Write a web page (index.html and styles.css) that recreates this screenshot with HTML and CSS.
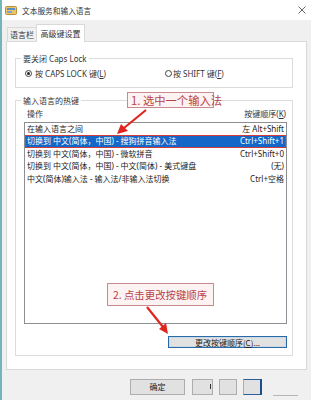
FILE: index.html
```html
<!DOCTYPE html>
<html lang="zh-CN">
<head>
<meta charset="utf-8">
<title>文本服务和输入语言</title>
<link rel="stylesheet" href="styles.css">
</head>
<body>
<div class="window">
  <div class="titlebar">
    <svg class="app-icon" width="12" height="11" viewBox="0 0 12 11">
      <rect x="0.5" y="1.5" width="11" height="8" rx="1" fill="#e9c46a" stroke="#b8903a" stroke-width="1"/>
      <rect x="2" y="3" width="8" height="2" fill="#5b8fc7"/>
      <rect x="2" y="6" width="5" height="2" fill="#7aa6d6"/>
    </svg>
    <span class="title">文本服务和输入语言</span>
    <span class="close">
      <svg width="8" height="8" viewBox="0 0 8 8"><path d="M0.5 0.5 L7.5 7.5 M7.5 0.5 L0.5 7.5" stroke="#555" stroke-width="0.9" fill="none"/></svg>
    </span>
  </div>

  <div class="tabs">
    <div class="tab">语言栏</div>
    <div class="tab tab-active">高级键设置</div>
  </div>

  <div class="panel">
    <div class="group group-caps">
      <div class="group-title">要关闭 Caps Lock</div>
      <div class="radio-row">
        <label class="radio"><span class="radio-dot checked"></span>按 CAPS LOCK 键(<u>L</u>)</label>
        <label class="radio radio-shift"><span class="radio-dot"></span>按 SHIFT 键(<u>F</u>)</label>
      </div>
    </div>

    <div class="group group-hotkeys">
      <div class="group-title">输入语言的热键</div>
      <div class="list-head">
        <span>操作</span>
        <span>按键顺序(<u>K</u>)</span>
      </div>
      <div class="listbox">
        <div class="row"><span>在输入语言之间</span><span>左 Alt+Shift</span></div>
        <div class="row row-selected"><span>切换到 中文(简体，中国) - 搜狗拼音输入法</span><span>Ctrl+Shift+1</span></div>
        <div class="row"><span>切换到 中文(简体，中国) - 微软拼音</span><span>Ctrl+Shift+0</span></div>
        <div class="row"><span>切换到 中文(简体，中国) - 中文(简体) - 美式键盘</span><span>(无)</span></div>
        <div class="row"><span>中文(简体)输入法 - 输入法/非输入法切换</span><span>Ctrl+空格</span></div>
      </div>
      <div class="btn-row">
        <button class="btn btn-change">更改按键顺序(<u>C</u>)...</button>
      </div>
    </div>
  </div>

  <div class="footer">
    <button class="btn btn-ok">确定</button>
    <button class="btn btn-b2"><span class="tick"></span></button>
    <button class="btn btn-b3"></button>
    <button class="btn btn-b4"></button>
    <span class="corner-line"></span>
  </div>

  <div class="callout callout-1">1. 选中一个输入法</div>
  <div class="callout callout-2">2. 点击更改按键顺序</div>

  <svg class="arrows" width="311" height="400" viewBox="0 0 311 400">
    <path d="M146 110 L124 128" stroke="#e0251f" stroke-width="2.2" fill="none"/>
    <path d="M117 134 L121 124 L128 131 Z" fill="#e0251f"/>
    <path d="M147 307 L163 327" stroke="#e0251f" stroke-width="2.2" fill="none"/>
    <path d="M168 334 L159 329 L166 323 Z" fill="#e0251f"/>
  </svg>
</div>
</body>
</html>
```

FILE: styles.css
```css
* { box-sizing: border-box; }

html, body {
  margin: 0;
  padding: 0;
}

body {
  width: 311px;
  height: 400px;
  overflow: hidden;
  background: #f0f0f0;
  font-family: "Noto Sans", "Noto Sans CJK SC", sans-serif;
  font-size: 8px;
  color: #2a2a2a;
}

u { text-decoration: underline; }

.window {
  position: relative;
  height: 400px;
  border-left: 2px solid #74b5b9;
}

.titlebar {
  height: 20px;
  background: #ffffff;
  display: flex;
  align-items: center;
  padding-left: 3px;
}

.app-icon { flex: none; }

.title {
  margin-left: 5px;
  font-family: "Noto Sans CJK SC", sans-serif;
  font-size: 7.7px;
  color: #333;
}

.close {
  margin-left: auto;
  margin-right: 5px;
  display: flex;
}

.tabs {
  height: 21px;
  display: flex;
  align-items: flex-end;
  padding-left: 5px;
  position: relative;
  z-index: 1;
}

.tab {
  height: 14px;
  padding: 0 2px 0 2px;
  width: 29px;
  border: 1px solid #d9d9d9;
  border-bottom: none;
  border-right: none;
  display: flex;
  align-items: center;
  justify-content: center;
  font-family: "Noto Sans CJK SC", sans-serif;
  color: #333;
  background: #f0f0f0;
}

.tab-active {
  height: 18px;
  width: 49px;
  background: #ffffff;
  border-right: 1px solid #d9d9d9;
  margin-bottom: -1px;
  padding-bottom: 1px;
}

.panel {
  margin: 0 4px 0 4px;
  height: 329px;
  background: #ffffff;
  border: 1px solid #d9d9d9;
  padding: 16px 13px 0 8px;
}

.group {
  border: 1px solid #dcdcdc;
  padding: 0 5px 0 8px;
}

.group-title {
  width: fit-content;
  margin: -6px 0 0 -3px;
  padding: 0 2px;
  background: #fff;
  line-height: 11px;
  color: #333;
}

.group-caps {
  height: 30px;
}

.radio-row {
  display: flex;
  align-items: center;
  margin-top: 4px;
  line-height: 11px;
}

.radio {
  display: flex;
  align-items: center;
  color: #333;
}

.radio-dot {
  width: 7px;
  height: 7px;
  border: 1px solid #444;
  border-radius: 50%;
  margin: 0 3px 0 1px;
  display: flex;
  align-items: center;
  justify-content: center;
}

.radio-dot.checked::after {
  content: "";
  width: 3px;
  height: 3px;
  border-radius: 50%;
  background: #222;
}

.radio-shift {
  margin-left: 58px;
}

.radio-shift .radio-dot {
  margin-right: 1px;
}

.group-hotkeys {
  margin-top: 12px;
  height: 256px;
}

.list-head {
  display: flex;
  justify-content: space-between;
  line-height: 11px;
  margin-top: 2px;
  padding: 0 1px 0 3px;
  color: #333;
}

.listbox {
  margin-top: 3px;
  height: 202px;
  border: 1px solid #8e8f94;
  padding-top: 0;
}

.row {
  height: 12.4px;
  line-height: 12.4px;
  display: flex;
  justify-content: space-between;
  padding: 0 2px 0 2px;
  white-space: nowrap;
  color: #222;
}

.row-selected {
  background: #1467c7;
  color: #ffffff;
  outline: 1px solid #d33a3a;
  outline-offset: -1px;
}

.btn-row {
  display: flex;
  justify-content: flex-end;
  margin-top: 12px;
}

.btn {
  font-family: "Noto Sans CJK SC", sans-serif;
  font-size: 8px;
  color: #222;
  background: #e1e1e1;
  border: 1px solid #adadad;
  padding: 0;
  margin: 0;
  display: flex;
  align-items: center;
  justify-content: center;
}

.btn-change {
  width: 119px;
  height: 12px;
  border: 1px solid #2b6aa8;
  box-shadow: inset 0 0 0 1px #c9d9e6;
}

.footer {
  display: flex;
  align-items: center;
  padding-left: 128px;
  margin-top: 8px;
  height: 17px;
  position: relative;
}

.btn-ok { width: 55px; height: 16px; }
.btn-b2 { width: 21px; height: 16px; margin-left: 7px; justify-content: flex-end; }
.btn-b3 { width: 18px; height: 16px; margin-left: 6px; }
.btn-b4 {
  width: 19px;
  height: 16px;
  margin-left: 6px;
  border-right: 2px solid #1d4f87;
  border-top: 1px solid #2a5f9c;
  border-bottom: 1px solid #2a5f9c;
}

.tick {
  width: 1px;
  height: 5px;
  background: #333;
  margin-right: 1px;
}

.corner-line {
  position: absolute;
  left: 271px;
  top: 17px;
  width: 25px;
  height: 1px;
  background: #b5b5b5;
}

.callout {
  position: absolute;
  font-family: "Noto Sans CJK SC", sans-serif;
  color: #b8434a;
  background: #fdf3f3;
  border: 1px solid #c98a8f;
  white-space: nowrap;
  display: flex;
  align-items: center;
  z-index: 2;
}

.callout-1 {
  left: 125px;
  top: 92px;
  width: 87px;
  height: 16px;
  font-size: 11.3px;
  padding-left: 3px;
}

.callout-2 {
  left: 105px;
  top: 283px;
  width: 107px;
  height: 23px;
  font-size: 10.4px;
  padding-left: 5px;
}

.arrows {
  position: absolute;
  left: -2px;
  top: 0;
  z-index: 3;
  pointer-events: none;
}
```
